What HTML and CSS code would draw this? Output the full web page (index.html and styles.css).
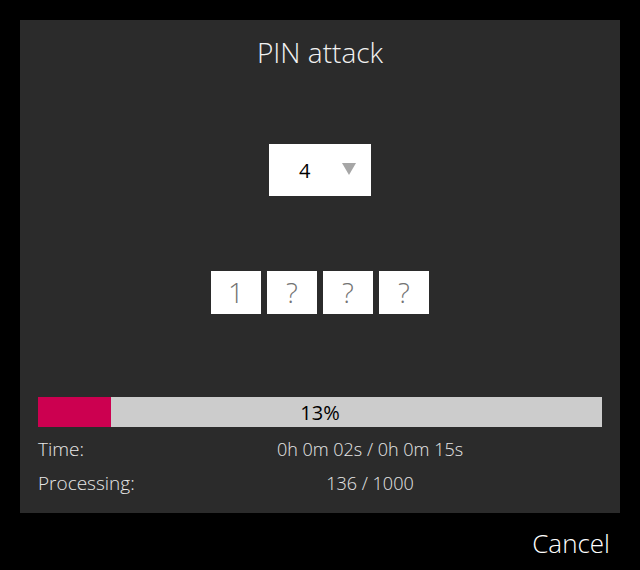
FILE: index.html
```html
<!DOCTYPE html>
<html>
<head>
<meta charset="utf-8">
<link rel="stylesheet" href="styles.css">
</head>
<body>
<div class="dialog">
  <div class="panel">
    <h1 class="title">PIN attack</h1>
    <div class="select">
      <span class="select-value">4</span>
      <svg class="arrow" width="14" height="12" viewBox="0 0 14 12"><path d="M0 0H14L7 12Z" fill="#a6a6a6"/></svg>
    </div>
    <div class="digits">
      <div class="digit">1</div>
      <div class="digit">?</div>
      <div class="digit">?</div>
      <div class="digit">?</div>
    </div>
    <div class="progress">
      <div class="progress-fill" style="width:13%"></div>
      <span class="progress-text">13%</span>
    </div>
    <div class="stats">
      <span class="label">Time:</span><span class="value">0h 0m 02s / 0h 0m 15s</span>
      <span class="label">Processing:</span><span class="value">136 / 1000</span>
    </div>
  </div>
  <div class="actions">
    <span class="cancel">Cancel</span>
  </div>
</div>
</body>
</html>
```

FILE: styles.css
```css
html, body {
  margin: 0;
  padding: 0;
  background: #000;
  width: 640px;
  height: 570px;
  overflow: hidden;
  font-family: "Open Sans", "Noto Sans", sans-serif;
}
.dialog {
  padding: 20px 20px 0 20px;
}
.panel {
  background: #2b2b2b;
  height: 493px;
  box-sizing: border-box;
  padding: 0 18px;
  display: flex;
  flex-direction: column;
  align-items: center;
}
.title {
  margin: 16px 0 0 0;
  font-weight: 300;
  font-size: 28px;
  line-height: 32px;
  color: #f2f2f2;
}
.select {
  margin-top: 76px;
  width: 102px;
  height: 52px;
  background: #fff;
  display: flex;
  align-items: center;
  box-sizing: border-box;
  padding-left: 30px;
}
.select-value {
  font-size: 20px;
  color: #000;
  width: 43px;
}
.arrow {
  margin-top: -2px;
}
.digits {
  margin-top: 75px;
  display: flex;
  gap: 6px;
}
.digit {
  width: 50px;
  height: 43px;
  background: #fff;
  color: #737373;
  font-size: 28px;
  font-weight: 300;
  line-height: 43px;
  display: flex;
  align-items: center;
  justify-content: center;
}
.progress {
  margin-top: 83px;
  align-self: stretch;
  height: 30px;
  background: #cccccc;
  position: relative;
  display: flex;
  align-items: center;
  justify-content: center;
}
.progress-fill {
  position: absolute;
  left: 0;
  top: 0;
  bottom: 0;
  background: #cc0050;
}
.progress-text {
  position: relative;
  font-size: 20px;
  color: #000;
}
.stats {
  align-self: stretch;
  margin-top: 9px;
  display: grid;
  grid-template-columns: 100px 1fr;
  row-gap: 8px;
  font-size: 19px;
  font-weight: 300;
  line-height: 26px;
  color: #e6e6e6;
}
.value {
  text-align: center;
  font-size: 18px;
}
.actions {
  display: flex;
  justify-content: flex-end;
  padding-right: 10px;
  margin-top: 14px;
}
.cancel {
  font-size: 26px;
  font-weight: 300;
  color: #fff;
  line-height: 32px;
}
```
